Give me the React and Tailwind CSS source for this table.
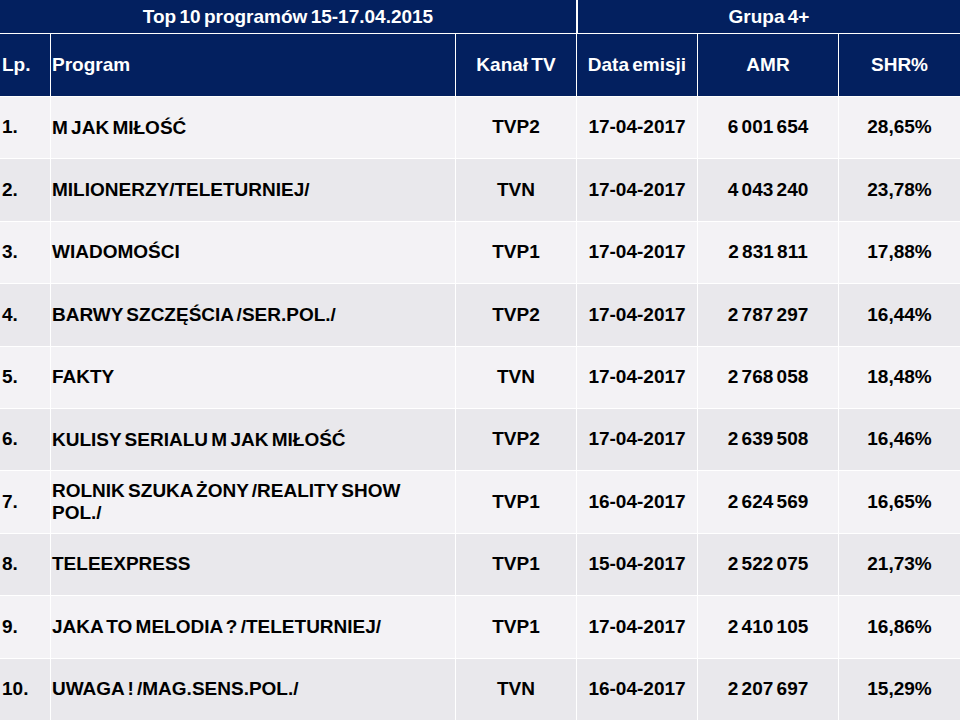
import React from "react";

const rows = [
  ["1.", "M JAK MIŁOŚĆ", "TVP2", "17-04-2017", "6 001 654", "28,65%"],
  ["2.", "MILIONERZY/TELETURNIEJ/", "TVN", "17-04-2017", "4 043 240", "23,78%"],
  ["3.", "WIADOMOŚCI", "TVP1", "17-04-2017", "2 831 811", "17,88%"],
  ["4.", "BARWY SZCZĘŚCIA /SER.POL./", "TVP2", "17-04-2017", "2 787 297", "16,44%"],
  ["5.", "FAKTY", "TVN", "17-04-2017", "2 768 058", "18,48%"],
  ["6.", "KULISY SERIALU M JAK MIŁOŚĆ", "TVP2", "17-04-2017", "2 639 508", "16,46%"],
  ["7.", ["ROLNIK SZUKA ŻONY /REALITY SHOW", "POL./"], "TVP1", "16-04-2017", "2 624 569", "16,65%"],
  ["8.", "TELEEXPRESS", "TVP1", "15-04-2017", "2 522 075", "21,73%"],
  ["9.", "JAKA TO MELODIA ? /TELETURNIEJ/", "TVP1", "17-04-2017", "2 410 105", "16,86%"],
  ["10.", "UWAGA ! /MAG.SENS.POL./", "TVN", "16-04-2017", "2 207 697", "15,29%"],
];

export default function App() {
  return (
    <div
      className="w-[960px] h-[720px] bg-white grid gap-px text-[19px] font-bold overflow-hidden [word-spacing:-2px]"
      style={{
        fontFamily: '"Liberation Sans", Arial, sans-serif',
        gridTemplateColumns: "50px 404px 120px 120px 140px 1fr",
        gridTemplateRows: "33px 62px repeat(10, 1fr)",
      }}
    >
      <div className="col-span-3 bg-[#03205f] text-white flex items-center justify-center leading-none">
        Top 10 programów 15-17.04.2015
      </div>
      <div className="col-span-3 bg-[#03205f] text-white flex items-center justify-center leading-none border-l border-white">
        Grupa 4+
      </div>

      <div className="bg-[#03205f] text-white flex items-center pl-[2px]">Lp.</div>
      <div className="bg-[#03205f] text-white flex items-center pl-[1px]">Program</div>
      <div className="bg-[#03205f] text-white flex items-center justify-center">Kanał TV</div>
      <div className="bg-[#03205f] text-white flex items-center justify-center">Data emisji</div>
      <div className="bg-[#03205f] text-white flex items-center justify-center">AMR</div>
      <div className="bg-[#03205f] text-white flex items-center justify-center">SHR%</div>

      {rows.map((r, i) => {
        const bg = i % 2 === 0 ? "bg-[#f3f2f5]" : "bg-[#e9e8ec]";
        return (
          <React.Fragment key={i}>
            <div className={`${bg} text-black flex items-center pl-[2px]`}>{r[0]}</div>
            <div className={`${bg} text-black flex items-center pl-[1px] leading-[22px]`}>
              {Array.isArray(r[1]) ? (
                <span>
                  {r[1][0]}
                  <br />
                  {r[1][1]}
                </span>
              ) : (
                r[1]
              )}
            </div>
            <div className={`${bg} text-black flex items-center justify-center`}>{r[2]}</div>
            <div className={`${bg} text-black flex items-center justify-center`}>{r[3]}</div>
            <div className={`${bg} text-black flex items-center justify-center`}>{r[4]}</div>
            <div className={`${bg} text-black flex items-center justify-center`}>{r[5]}</div>
          </React.Fragment>
        );
      })}
    </div>
  );
}
